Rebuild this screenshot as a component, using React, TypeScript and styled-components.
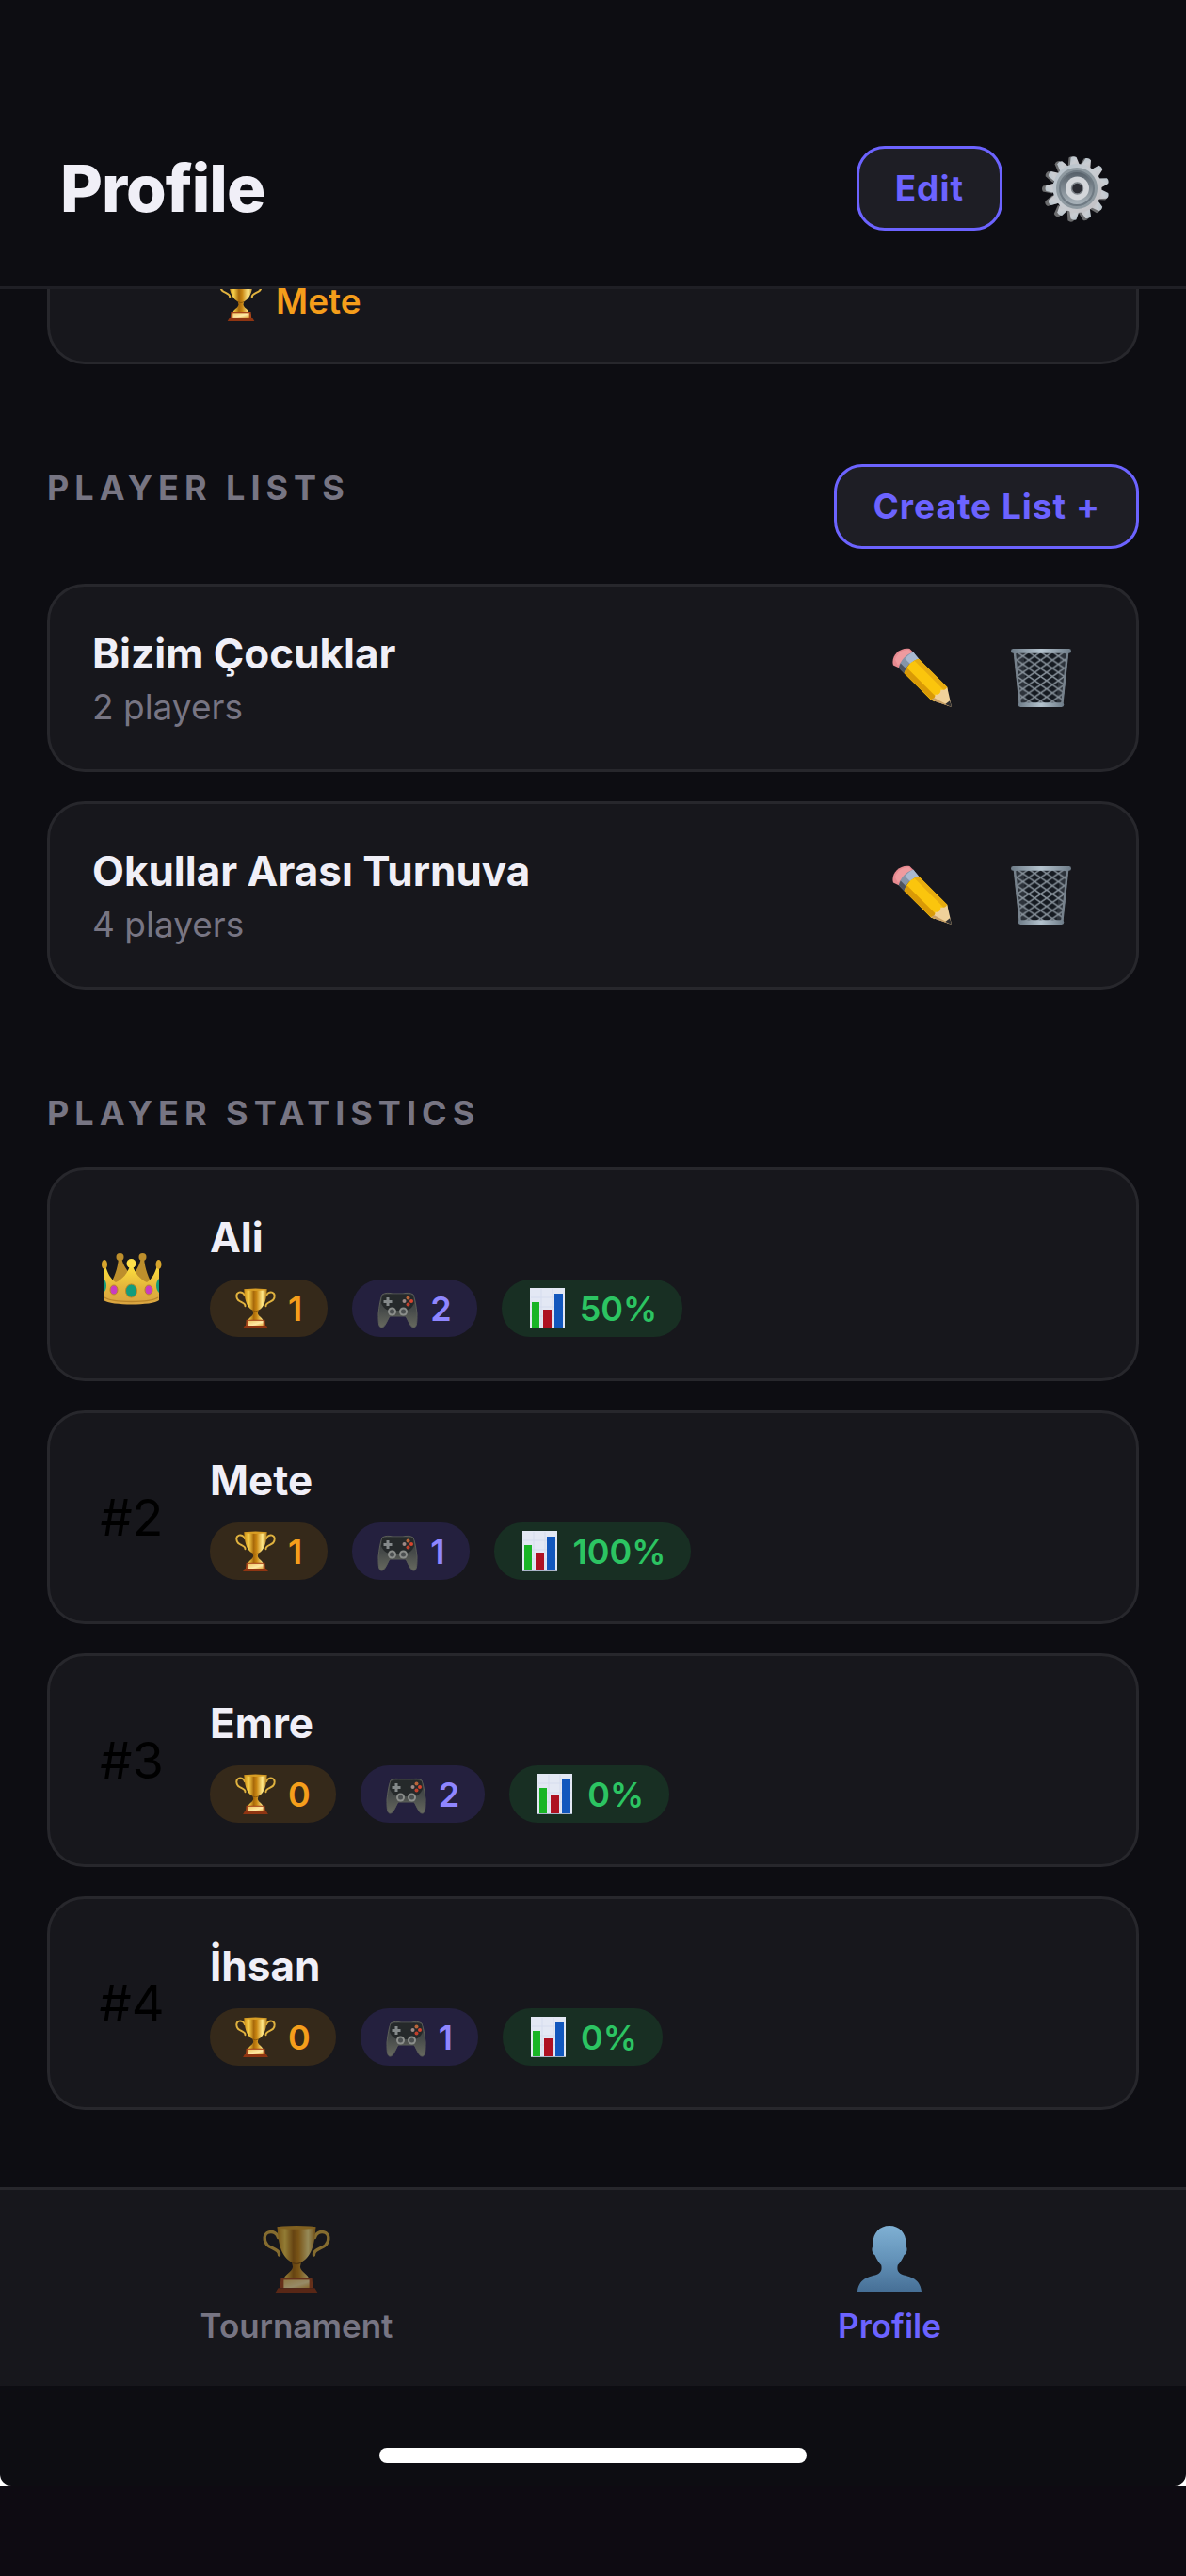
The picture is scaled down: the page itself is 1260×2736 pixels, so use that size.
import React from 'react';
import styled, { createGlobalStyle } from 'styled-components';

const colors = {
  background: '#0d0d12',
  surface: '#17171c',
  surfaceAlt: '#1e1e25',
  border: '#27272c',
  text: '#f0eff7',
  muted: '#777583',
  accent: '#6c63ff',
};

const GlobalStyle = createGlobalStyle`
  * {
    box-sizing: border-box;
  }

  body {
    margin: 0;
    background: #0e0b12;
    color: ${colors.text};
    font-family: Inter, Roboto, sans-serif;
    -webkit-font-smoothing: antialiased;
  }

  h1, h2, h3, p, ul {
    margin: 0;
    padding: 0;
  }

  button {
    font-family: inherit;
    cursor: pointer;
  }
`;

const StyledScreen = styled.div`
  display: flex;
  flex-direction: column;
  width: 100%;
  min-height: 100vh;
`;

const StyledHeader = styled.header`
  display: flex;
  align-items: center;
  justify-content: space-between;
  padding: 144px 57px 48px 64px;
  background: ${colors.background};
  border-bottom: 3px solid #1f1f25;

  h1 {
    font-weight: 800;
    font-size: 69px;
    line-height: 90px;
    letter-spacing: -1px;
  }
`;

const StyledHeaderActions = styled.div`
  display: flex;
  align-items: center;
  gap: 18px;
`;

const OutlineButton = styled.button`
  height: 90px;
  padding: 0 38px;
  border: 3px solid ${colors.accent};
  border-radius: 30px;
  background: ${colors.surfaceAlt};
  color: ${colors.accent};
  font-weight: 700;
  font-size: 37px;
  line-height: 48px;
  letter-spacing: 1px;
`;

const IconButton = styled.button`
  display: flex;
  align-items: center;
  justify-content: center;
  padding: 20px 24px;
  border: 0;
  background: none;
`;

const StyledMain = styled.main`
  padding: 0 50px 82px;
  background: ${colors.background};
`;

const MatchCard = styled.div`
  padding: 0 180px 43px;
  border: 3px solid ${colors.border};
  border-top: 0;
  border-radius: 0 0 40px 40px;
  background: ${colors.surface};
`;

const Winner = styled.p`
  display: flex;
  align-items: flex-start;
  gap: 14px;
  color: #f59e1b;
  font-weight: 600;
  font-size: 37px;
  line-height: 26px;
`;

const WinnerIcon = styled.span`
  display: flex;
  align-items: flex-end;
  height: 34px;
  overflow: hidden;
`;

const Section = styled.section`
  margin-top: 106px;
`;

const SectionHeader = styled.div`
  display: flex;
  align-items: flex-start;
  justify-content: space-between;
  margin-bottom: 37px;
`;

const SectionTitle = styled.h2`
  padding-top: 4px;
  color: ${colors.muted};
  font-weight: 700;
  font-size: 36px;
  line-height: 42px;
  letter-spacing: 6px;
`;

const CardList = styled.ul`
  display: flex;
  flex-direction: column;
  gap: 31px;
  list-style: none;
`;

const Card = styled.li`
  display: flex;
  align-items: center;
  padding: 44px 45px;
  border: 3px solid ${colors.border};
  border-radius: 40px;
  background: ${colors.surface};
`;

const CardBody = styled.div`
  flex: 1;
  min-width: 0;

  h3 {
    font-weight: 700;
    font-size: 44px;
    line-height: 54px;
  }

  p {
    margin-top: 8px;
    color: ${colors.muted};
    font-size: 37px;
    line-height: 44px;
  }
`;

const CardActions = styled.div`
  display: flex;
  gap: 14px;
`;

const Rank = styled.div`
  display: flex;
  justify-content: center;
  width: 84px;
  margin-right: 41px;
  color: #000000;
  font-size: 54px;
  line-height: 60px;
`;

const Pills = styled.div`
  display: flex;
  flex-wrap: wrap;
  gap: 26px;
  margin-top: 18px;
`;

const pillTones = {
  gold: { background: '#35291a', color: '#f59e1b' },
  violet: { background: '#24203e', color: '#8f86ff' },
  green: { background: '#182f23', color: '#2cc462' },
};

const Pill = styled.span<{ $tone: keyof typeof pillTones }>`
  display: flex;
  align-items: center;
  gap: 13px;
  height: 61px;
  padding: 0 27px;
  border-radius: 30px;
  background: ${({ $tone }) => pillTones[$tone].background};
  color: ${({ $tone }) => pillTones[$tone].color};
  font-weight: 600;
  font-size: 36px;
  line-height: 48px;
`;

const TabBar = styled.nav`
  display: flex;
  border-top: 3px solid ${colors.border};
  background: ${colors.surface};
`;

const Tab = styled.button<{ $active?: boolean }>`
  display: flex;
  flex: 1;
  flex-direction: column;
  align-items: center;
  gap: 11px;
  padding: 37px 0 40px;
  border: 0;
  background: none;
  color: ${({ $active }) => ($active ? colors.accent : colors.muted)};
  font-weight: 600;
  font-size: 35px;
  line-height: 48px;

  svg {
    opacity: ${({ $active }) => ($active ? 1 : 0.55)};
  }
`;

const HomeArea = styled.div`
  background: #ffffff;
`;

const HomeInset = styled.div`
  display: flex;
  justify-content: center;
  padding: 66px 0 24px;
  border-radius: 0 0 12px 12px;
  background: ${colors.background};
`;

const HomeIndicator = styled.div`
  width: 36%;
  height: 16px;
  border-radius: 8px;
  background: #ffffff;
`;

const StyledDefs = styled.svg`
  position: absolute;
`;

// gradients shared by all the icons
const IconDefs = () => (
  <StyledDefs width="0" height="0" aria-hidden="true">
    <defs>
      <linearGradient id="gold" x1="0" x2="1" y1="0" y2="0">
        <stop offset="0" stopColor="#c98a12" />
        <stop offset="0.2" stopColor="#f7cf4a" />
        <stop offset="0.42" stopColor="#a8690a" />
        <stop offset="0.55" stopColor="#c98612" />
        <stop offset="0.8" stopColor="#ffe98a" />
        <stop offset="1" stopColor="#b57a12" />
      </linearGradient>
      <linearGradient id="plate" x1="0" x2="1" y1="0" y2="1">
        <stop offset="0" stopColor="#f0c765" />
        <stop offset="0.6" stopColor="#ffe9a6" />
        <stop offset="1" stopColor="#e0a83c" />
      </linearGradient>
      <linearGradient id="crownFront" x1="0" x2="0" y1="0" y2="1">
        <stop offset="0" stopColor="#ffe23d" />
        <stop offset="0.55" stopColor="#e4b53c" />
        <stop offset="1" stopColor="#d9a340" />
      </linearGradient>
      <linearGradient id="person" x1="0" x2="0" y1="0" y2="1">
        <stop offset="0" stopColor="#7fb0d3" />
        <stop offset="0.5" stopColor="#6493b9" />
        <stop offset="1" stopColor="#466f96" />
      </linearGradient>
      <linearGradient id="metal" x1="0" x2="1" y1="0" y2="1">
        <stop offset="0" stopColor="#b3c0c9" />
        <stop offset="0.5" stopColor="#c9cdd2" />
        <stop offset="1" stopColor="#c2bfc2" />
      </linearGradient>
      <linearGradient id="groove" x1="0" x2="0" y1="0" y2="1">
        <stop offset="0" stopColor="#566069" />
        <stop offset="1" stopColor="#a9b3ba" />
      </linearGradient>
      <linearGradient id="pad" x1="0" x2="0" y1="0" y2="1">
        <stop offset="0" stopColor="#34383a" />
        <stop offset="0.5" stopColor="#474b4a" />
        <stop offset="1" stopColor="#67695f" />
      </linearGradient>
      <linearGradient id="rim" x1="0" x2="1" y1="0" y2="0">
        <stop offset="0" stopColor="#6d7b87" />
        <stop offset="0.5" stopColor="#b4c3ce" />
        <stop offset="1" stopColor="#6d7b87" />
      </linearGradient>
      <pattern id="mesh" width="13" height="9" patternUnits="userSpaceOnUse">
        <path d="M0 0 L13 9 M13 0 L0 9" stroke="#87919a" strokeWidth="1.5" />
      </pattern>
    </defs>
  </StyledDefs>
);

type IconProps = { size: number };

const TrophyIcon = ({ size }: IconProps) => (
  <svg width={size} height={size} viewBox="0 0 74 74" fill="none" aria-hidden="true">
    <g stroke="#e0b23f" strokeWidth="3.4" strokeLinecap="round">
      <path d="M17 14 C16 9 11 7 7 8 C1 10 1 17 5 22 C9 26 19 27 18 33" />
      <path d="M57 14 C58 9 63 7 67 8 C73 10 73 17 69 22 C65 26 55 27 56 33" />
    </g>
    <path d="M16 2 H58 C57 18 55 34 42 41 L41 46 C42 52 50 54 51 60 H23 C24 54 32 52 33 46 L32 41 C19 34 17 18 16 2 Z" fill="url(#gold)" />
    <ellipse cx="37" cy="3" rx="21" ry="2" fill="#d99e24" />
    <path d="M32 41 C35 43 39 43 42 41" stroke="#8a5608" strokeWidth="1.5" />
    <path d="M20 58 H54 L55 69 H19 Z" fill="#a8461a" />
    <rect x="23" y="60" width="28" height="9" fill="url(#plate)" />
    <path d="M17 69 H57 L60 74 H14 Z" fill="#8f3512" />
  </svg>
);

const GearIcon = ({ size }: IconProps) => {
  const teeth = Array(13).fill(0);

  return (
    <svg width={size} height={size} viewBox="0 0 72 72" aria-hidden="true">
      <g fill="#6b6c6e">
        {teeth.map((_, index) => (
          <path key={index} d="M30 13 L32 3 Q35 1 38 3 L40 13 Z" transform={`rotate(${index * 27.69 - 6} 35 37)`} />
        ))}
      </g>
      <g fill="url(#metal)">
        {teeth.map((_, index) => (
          <path key={index} d="M32 13 L34 3 Q37 1 40 3 L43 13 Z" transform={`rotate(${index * 27.69 - 6} 37.5 36)`} />
        ))}
        <circle cx="37.5" cy="36" r="26" />
      </g>
      <circle cx="37" cy="36" r="20.5" fill="#6f7a83" stroke="#8f9aa1" strokeWidth="3" />
      <circle cx="37" cy="36" r="17" fill="url(#groove)" />
      <circle cx="37.5" cy="36" r="12.5" fill="#d3d6da" />
      <circle cx="37.5" cy="36" r="6" fill="#2b2c33" stroke="#7f858b" strokeWidth="1.5" />
    </svg>
  );
};

const PencilIcon = ({ size }: IconProps) => (
  <svg width={size} height={size} viewBox="0 0 66 66" aria-hidden="true">
    <path d="M1 19 C-2 9 8 -1 19 1 L24 6 L7 22 Z" fill="#e78a90" />
    <path d="M3 13 C5 6 11 2 18 2 L21 5 L6 19 Z" fill="#f2a2a5" opacity="0.7" />
    <path d="M7 22 C9 14 15 7 23 5 L29 12 C21 14 15 20 13 28 Z" fill="#8594a8" />
    <path d="M14 12 C16 9 20 6 23 5 L29 12 C25 13 22 15 20 18 Z" fill="#a9b9d0" />
    <path d="M7 22 L9 17 L15 23 L13 28 Z" fill="#4e5460" />
    <path d="M13 28 C15 20 21 14 29 12 L60 43 L61 49 L46 59 L42 57 Z" fill="#fbc50d" />
    <path d="M13 28 L16 22 L48 54 L44 58 Z" fill="#d99a06" />
    <path d="M24 14 L29 12 L60 43 L58 48 Z" fill="#e8ad10" />
    <path d="M42 57 C45 56 47 55 47 51 C51 52 53 50 53 46 C57 47 59 45 60 43 L65 65 Z" fill="#f0d19a" />
    <path d="M42 57 L46 55 L61 63 L65 65 Z" fill="#c99f63" />
    <path d="M58 62 L63 58 L65 65 Z" fill="#2d2d30" />
  </svg>
);

const TrashIcon = ({ size }: IconProps) => (
  <svg width={size} height={size} viewBox="0 0 66 66" aria-hidden="true">
    <path d="M3 4 H63 L57 62 H9 Z" fill="#151a21" />
    <path d="M3 4 H63 L57 62 H9 Z" fill="url(#mesh)" />
    <path d="M4 5 L10 62 M62 5 L56 62" stroke="#76818b" strokeWidth="2.5" />
    <path d="M5 6 L14 6 L17 60 L10 60 Z M61 6 L54 6 L50 60 L56 60 Z" fill="#8a96a0" opacity="0.2" />
    <rect x="0" y="1" width="66" height="5" rx="2.5" fill="url(#rim)" />
    <rect x="8" y="60" width="50" height="5" rx="2.5" fill="url(#rim)" />
  </svg>
);

const CrownIcon = ({ size }: IconProps) => (
  <svg width={size} height={size} viewBox="0 -2 64 64" aria-hidden="true">
    <g fill="#bd8f2c">
      <path d="M8 42 C13 34 17 24 18 12 H21 C23 20 27 26 32 30 C37 26 40 20 42 12 H45 C46 24 50 34 55 42 Z" />
      <circle cx="19.5" cy="11" r="4" />
      <circle cx="43.5" cy="11" r="4" />
    </g>
    <path d="M2 20 H4 C6 28 10 35 15 38 C22 35 28 28 30 20 H33 C35 28 41 35 48 38 C53 35 57 28 59 20 H61 L61 57 C54 63 10 63 2 57 Z" fill="url(#crownFront)" />
    <circle cx="31.5" cy="18" r="5" fill="#ffe14a" />
    <ellipse cx="3" cy="19" rx="3" ry="5" fill="#d7a52d" />
    <ellipse cx="60.5" cy="19" rx="3" ry="5" fill="#d7a52d" />
    <path d="M3 54 C12 60 51 60 60 54" fill="none" stroke="#b98529" strokeWidth="1.5" />
    <ellipse cx="31.5" cy="47" rx="6" ry="7" fill="#139c7c" stroke="#b98529" />
    <ellipse cx="13" cy="46" rx="4" ry="5" fill="#c93cc0" stroke="#b98529" />
    <ellipse cx="50" cy="46" rx="4" ry="5" fill="#c93cc0" stroke="#b98529" />
    <path d="M2 34 C6 37 6 46 2 49 Z M61 34 C57 37 57 46 61 49 Z" fill="#139c7c" />
  </svg>
);

const GamepadIcon = ({ size }: IconProps) => (
  <svg width={size} height={size} viewBox="0 0 43 43" aria-hidden="true">
    <path d="M5 7 C8 5 12 5 16 6 H27 C31 5 35 5 38 7 C40 12 41 19 42 27 C42 36 42 42 38.5 42 C35 42 33 35 30 30 H13 C10 35 8 42 4.5 42 C1 42 1 36 1 27 C2 19 3 12 5 7 Z" fill="url(#pad)" stroke="#5b5e58" />
    <path d="M5 8 C10 6 33 6 38 8 L39 16 C37 21 34 23 31 24 H12 C9 23 6 21 4 16 Z" fill="#25292a" />
    <path d="M9.5 13 V10 H12.5 V13 H15.5 V16 H12.5 V19 H9.5 V16 H6.5 V13 Z" fill="#84898a" />
    <circle cx="32.5" cy="10.5" r="2" fill="#b9653a" />
    <circle cx="28.5" cy="14" r="2" fill="#9f8a86" />
    <circle cx="36" cy="14" r="2" fill="#d8452f" />
    <circle cx="32.5" cy="17.5" r="2" fill="#c0402c" />
    <circle cx="15.5" cy="25" r="4.5" fill="#8b8e8b" />
    <circle cx="27.5" cy="25" r="4.5" fill="#8b8e8b" />
    <circle cx="15.5" cy="25" r="2.5" fill="#4b4f50" />
    <circle cx="27.5" cy="25" r="2.5" fill="#4b4f50" />
  </svg>
);

const ChartIcon = ({ size }: IconProps) => (
  <svg width={size} height={size} viewBox="0 0 43 43" aria-hidden="true">
    <rect x="3" y="0" width="37" height="43" fill="#e3e8f4" />
    <path d="M4 10 H39 M4 20 H39 M4 30 H39 M15 1 V42 M27 1 V42" stroke="#d5dcee" />
    <rect x="5" y="15" width="8" height="28" fill="#19b526" />
    <rect x="17" y="23" width="9" height="20" fill="#ae1122" />
    <rect x="29" y="6" width="9" height="37" fill="#1257bd" />
    <path d="M3 42.5 H40" stroke="#aab4c8" />
  </svg>
);

const PersonIcon = ({ size }: IconProps) => (
  <svg width={size} height={size} viewBox="0 0 74 74" aria-hidden="true">
    <path
      d="M37 1 C48 1 55 9 55 20 C55 21 55 23 55 24 C57 25 56 32 53 33 C51 38 48 42 46 44 C45 49 46 52 50 54 C56 57 70 56 72 73 H2 C4 56 18 57 24 54 C28 52 29 49 28 44 C26 42 23 38 21 33 C18 32 17 25 19 24 C19 23 19 21 19 20 C19 9 26 1 37 1 Z"
      fill="url(#person)"
    />
  </svg>
);

const playerLists = [
  { id: 1, name: 'Bizim Çocuklar', players: 2 },
  { id: 2, name: 'Okullar Arası Turnuva', players: 4 },
];

const playerStats = [
  { name: 'Ali', wins: 1, games: 2, rate: 50 },
  { name: 'Mete', wins: 1, games: 1, rate: 100 },
  { name: 'Emre', wins: 0, games: 2, rate: 0 },
  { name: 'İhsan', wins: 0, games: 1, rate: 0 },
];

const App = () => {
  return (
    <StyledScreen>
      <GlobalStyle />
      <IconDefs />

      <StyledHeader>
        <h1>Profile</h1>
        <StyledHeaderActions>
          <OutlineButton type="button">Edit</OutlineButton>
          <IconButton type="button" aria-label="Settings">
            <GearIcon size={72} />
          </IconButton>
        </StyledHeaderActions>
      </StyledHeader>

      <StyledMain>
        <MatchCard>
          <Winner>
            <WinnerIcon>
              <TrophyIcon size={46} />
            </WinnerIcon>
            Mete
          </Winner>
        </MatchCard>

        <Section>
          <SectionHeader>
            <SectionTitle>PLAYER LISTS</SectionTitle>
            <OutlineButton type="button">Create List +</OutlineButton>
          </SectionHeader>
          <CardList>
            {playerLists.map((list) => (
              <Card key={list.id}>
                <CardBody>
                  <h3>{list.name}</h3>
                  <p>{list.players} players</p>
                </CardBody>
                <CardActions>
                  <IconButton type="button" aria-label="Edit list">
                    <PencilIcon size={64} />
                  </IconButton>
                  <IconButton type="button" aria-label="Delete list">
                    <TrashIcon size={64} />
                  </IconButton>
                </CardActions>
              </Card>
            ))}
          </CardList>
        </Section>

        <Section>
          <SectionHeader>
            <SectionTitle>PLAYER STATISTICS</SectionTitle>
          </SectionHeader>
          <CardList>
            {playerStats.map((player, index) => (
              <Card key={player.name}>
                <Rank>{index === 0 ? <CrownIcon size={64} /> : `#${index + 1}`}</Rank>
                <CardBody>
                  <h3>{player.name}</h3>
                  <Pills>
                    <Pill $tone="gold">
                      <TrophyIcon size={43} />
                      {player.wins}
                    </Pill>
                    <Pill $tone="violet">
                      <GamepadIcon size={43} />
                      {player.games}
                    </Pill>
                    <Pill $tone="green">
                      <ChartIcon size={43} />
                      {player.rate}%
                    </Pill>
                  </Pills>
                </CardBody>
              </Card>
            ))}
          </CardList>
        </Section>
      </StyledMain>

      <TabBar>
        <Tab type="button">
          <TrophyIcon size={72} />
          Tournament
        </Tab>
        <Tab type="button" $active>
          <PersonIcon size={72} />
          Profile
        </Tab>
      </TabBar>

      <HomeArea>
        <HomeInset>
          <HomeIndicator />
        </HomeInset>
      </HomeArea>
    </StyledScreen>
  );
};

export default App;
